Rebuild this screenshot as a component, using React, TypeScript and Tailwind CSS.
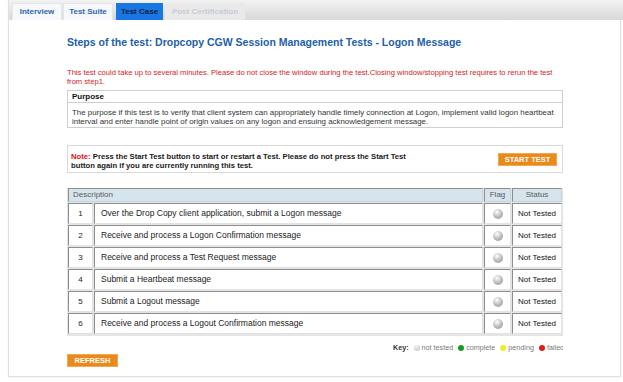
import React from "react";

const rows = [
  "Over the Drop Copy client application, submit a Logon message",
  "Receive and process a Logon Confirmation message",
  "Receive and process a Test Request message",
  "Submit a Heartbeat message",
  "Submit a Logout message",
  "Receive and process a Logout Confirmation message",
];

const cell =
  "bg-white border-t border-l border-b border-r border-t-[#8e8e8e] border-l-[#8e8e8e] border-b-[#e2e2e2] border-r-[#e2e2e2] flex items-center";

const head =
  "h-full bg-[#d6e4ee] border-t border-l border-b border-r border-t-[#8e8e8e] border-l-[#8e8e8e] border-b-[#c8d4dc] border-r-[#c8d4dc] flex items-center text-[#5a5a5a]";

function Ball() {
  return (
    <span className="block w-[10px] h-[10px] rounded-full bg-[radial-gradient(circle_at_40%_30%,#ffffff,#c4c4c4_45%,#8c8c8c)]" />
  );
}

export default function App() {
  return (
    <div className="w-[623px] h-[382px] bg-white overflow-hidden font-['Liberation_Sans',Arial,sans-serif]">
      <div className="ml-[8px] w-[613px] h-[377px] border-l border-r border-b border-[#e0e0e0] shadow-[0_1px_2px_rgba(0,0,0,0.06)]">
        {/* tab bar */}
        <div className="h-[20px] -mr-[3px] bg-gradient-to-b from-[#f2f2f2] to-[#d8d8d8] flex items-end pl-[3px] text-[8px] font-bold">
          <div className="w-[50px] h-[17px] bg-[#f6f8fb] border border-[#e2e6ea] border-b-0 flex items-center justify-center text-[#2d67ad]">
            Interview
          </div>
          <div className="ml-[1px] w-[50px] h-[17px] bg-[#f6f8fb] border border-[#e2e6ea] border-b-0 flex items-center justify-center text-[#2d67ad]">
            Test Suite
          </div>
          <div className="ml-[3px] w-[47px] h-[17px] bg-[#1877e3] flex items-center justify-center text-[#0c1d3c]">
            Test Case
          </div>
          <div className="ml-[2px] w-[80px] h-[17px] bg-[#e9e9e9] flex items-center justify-center text-[#c6ccd4]">
            Post Certification
          </div>
        </div>

        <div className="pl-[58px] w-[554px]">
          <div className="mt-[15px] h-[14px] leading-[14px] text-[10.5px] font-bold text-[#2260a9] whitespace-nowrap">
            Steps of the test: Dropcopy CGW Session Management Tests - Logon Message
          </div>

          <div className="mt-[19px] w-[494px] text-[7.6px] leading-[9px] text-[#d42222]">
            This test could take up to several minutes. Please do not close the window during the test.Closing window/stopping test requires to rerun the test from step1.
          </div>

          <div className="mt-[4px] w-[496px] border border-[#cfcfcf]">
            <div className="h-[12px] flex items-center pl-[4px] text-[8px] font-bold text-[#111] border-b border-[#cfcfcf]">
              Purpose
            </div>
            <div className="pl-[4px] pr-[4px] pt-[5px] pb-[1px] text-[7.9px] leading-[9px] text-[#333]">
              The purpose if this test is to verify that client system can appropriately handle timely connection at Logon, implement valid logon heartbeat interval and enter handle point of origin values on any logon and ensuing acknowledgement message.
            </div>
          </div>

          <div className="mt-[17px] w-[496px] h-[28px] border border-[#d8d8d8] flex items-start pl-[3px] pr-[5px]">
            <p className="mt-[6px] w-[340px] text-[7.7px] leading-[9px] font-bold text-[#1a1a1a]">
              <span className="text-[#e01010]">Note:</span> Press the Start Test button to start or restart a Test. Please do not press the Start Test button again if you are currently running this test.
            </p>
            <div className="ml-auto mt-[7px] w-[59px] h-[13px] bg-[#ea8a1c] border border-[#f2a94e] flex items-center justify-center text-white text-[7.5px] font-bold">
              START TEST
            </div>
          </div>

          <div className="mt-[15px] w-[496px] overflow-hidden">
            <div className="h-[148px] overflow-hidden bg-[#e4e4e4] pl-[1px] flex flex-col gap-[1px] text-[8px]">
              <div className="flex gap-[1px] h-[14px] shrink-0">
                <div className={`${head} w-[415px] pl-[4px]`}>Description</div>
                <div className={`${head} w-[27px] justify-center`}>Flag</div>
                <div className={`${head} w-[50px] justify-center`}>Status</div>
              </div>
              {rows.map((r, i) => (
                <div key={i} className="flex gap-[1px] h-[21px] shrink-0">
                  <div className={`${cell} w-[25px] justify-center text-[#222]`}>{i + 1}</div>
                  <div className={`${cell} w-[389px] pl-[6px] text-[8.5px] text-[#222]`}>{r}</div>
                  <div className={`${cell} w-[27px] justify-center`}>
                    <Ball />
                  </div>
                  <div className={`${cell} w-[50px] justify-center text-[#111] whitespace-nowrap`}>Not Tested</div>
                </div>
              ))}
            </div>
            <div className="mt-[7px] h-[10px] pl-[326px] flex items-center whitespace-nowrap text-[7.2px] text-[#7a7a7a]">
              <span className="font-bold text-[#333]">Key:</span>
              <span className="ml-[5px] mr-[2px] w-[6px] h-[6px] rounded-full bg-[radial-gradient(circle_at_40%_30%,#f4f4f4,#bcbcbc)] shrink-0" />
              <span>not tested</span>
              <span className="ml-[5px] mr-[2px] w-[6px] h-[6px] rounded-full bg-[#1a9a22] shrink-0" />
              <span>complete</span>
              <span className="ml-[5px] mr-[2px] w-[6px] h-[6px] rounded-full bg-[#f2ee1e] shrink-0" />
              <span>pending</span>
              <span className="ml-[5px] mr-[2px] w-[6px] h-[6px] rounded-full bg-[#e31a1a] shrink-0" />
              <span>failed</span>
            </div>
          </div>

          <div className="mt-[1px] w-[51px] h-[13px] bg-[#ea8a1c] border border-[#f2a94e] flex items-center justify-center text-white text-[7.5px] font-bold">
            REFRESH
          </div>
        </div>
      </div>
    </div>
  );
}
